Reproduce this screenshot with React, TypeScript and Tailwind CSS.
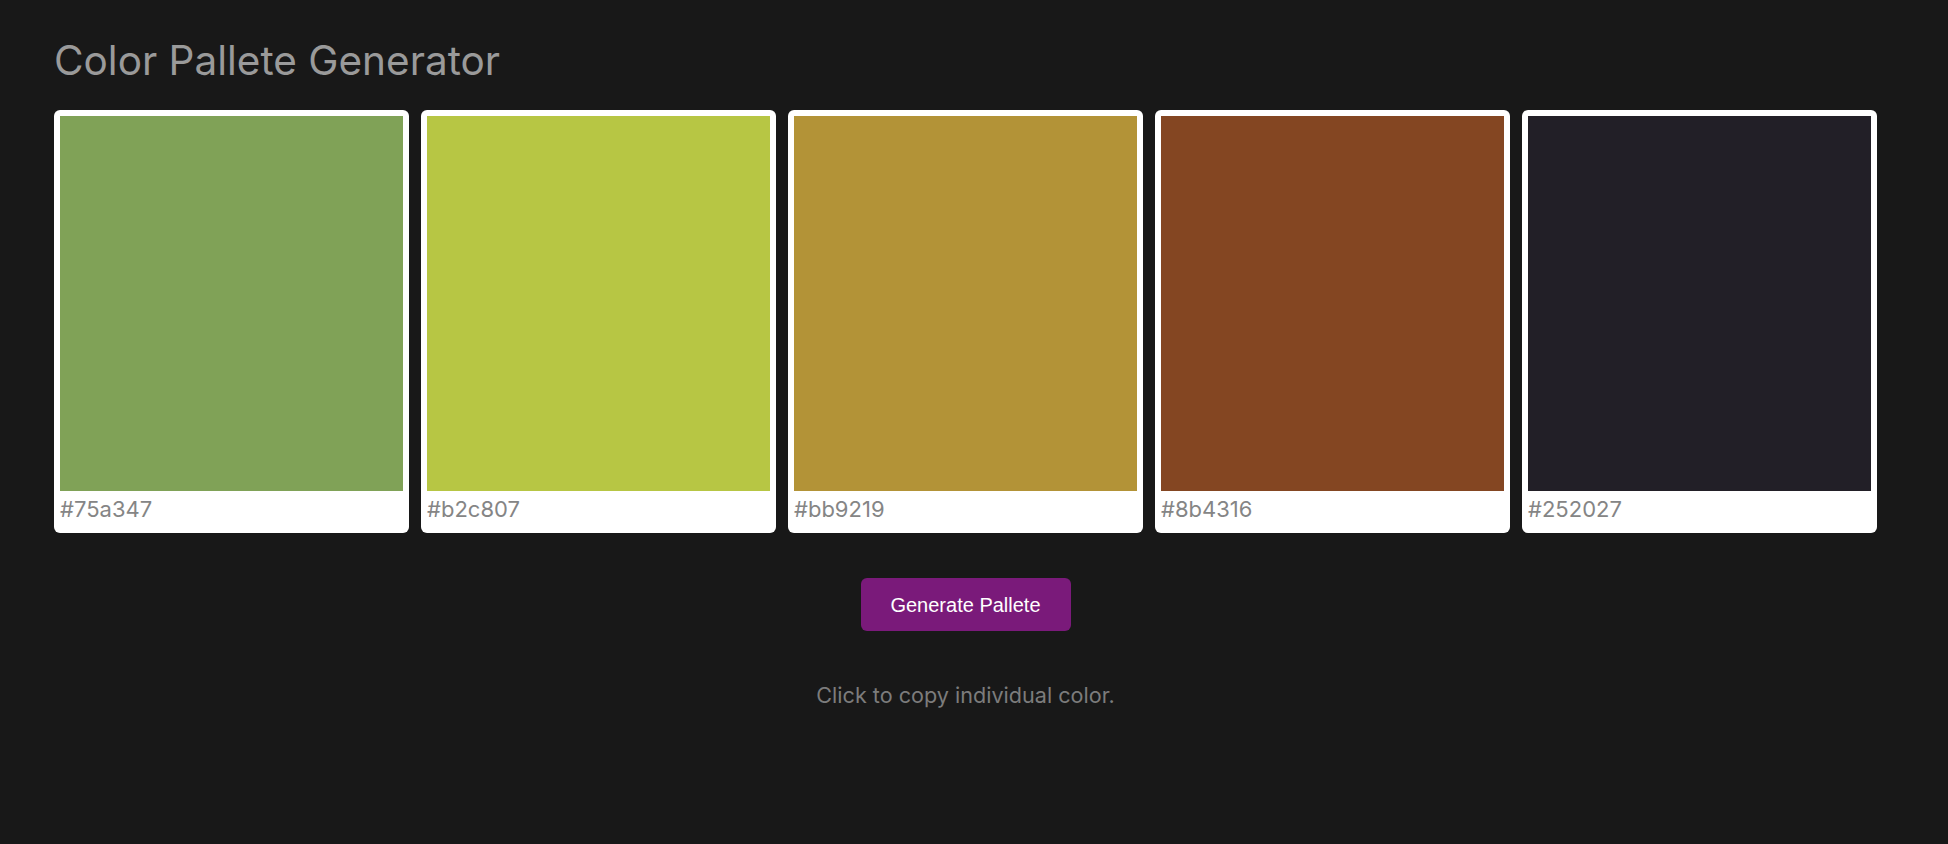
import React from "react";

const swatches = [
  { shown: "bg-[#80a257]", hex: "#75a347" },
  { shown: "bg-[#b7c644]", hex: "#b2c807" },
  { shown: "bg-[#b39337]", hex: "#bb9219" },
  { shown: "bg-[#844622]", hex: "#8b4316" },
  { shown: "bg-[#221f27]", hex: "#252027" },
];

export default function App() {
  return (
    <div className="min-h-[844px] w-full bg-[#181818] font-['Inter','Noto_Sans',sans-serif]">
      <div className="w-[1823px] ml-[54px] pt-[37px]">
        <h1 className="text-[40.5px] leading-[48px] text-[#9a9a9a] font-normal">
          Color Pallete Generator
        </h1>
        <div className="flex gap-[12px] mt-[25px]">
          {swatches.map((s) => (
            <div
              key={s.hex}
              className="w-[355px] bg-white rounded-[6px] pt-[6px] px-[6px] pb-[9px] cursor-pointer"
            >
              <div className={`h-[375px] w-full ${s.shown}`} />
              <div className="mt-[3px] text-[22px] leading-[30px] text-[#858585]">{s.hex}</div>
            </div>
          ))}
        </div>
        <div className="flex justify-center mt-[45px]">
          <button className="w-[210px] h-[53px] rounded-[6px] bg-[#7a1a7a] text-white text-[20px] font-['Liberation_Sans',Arial,sans-serif]">
            Generate Pallete
          </button>
        </div>
        <p className="text-center mt-[49px] text-[21.6px] leading-[30px] text-[#7c7c7c]">
          Click to copy individual color.
        </p>
      </div>
    </div>
  );
}
